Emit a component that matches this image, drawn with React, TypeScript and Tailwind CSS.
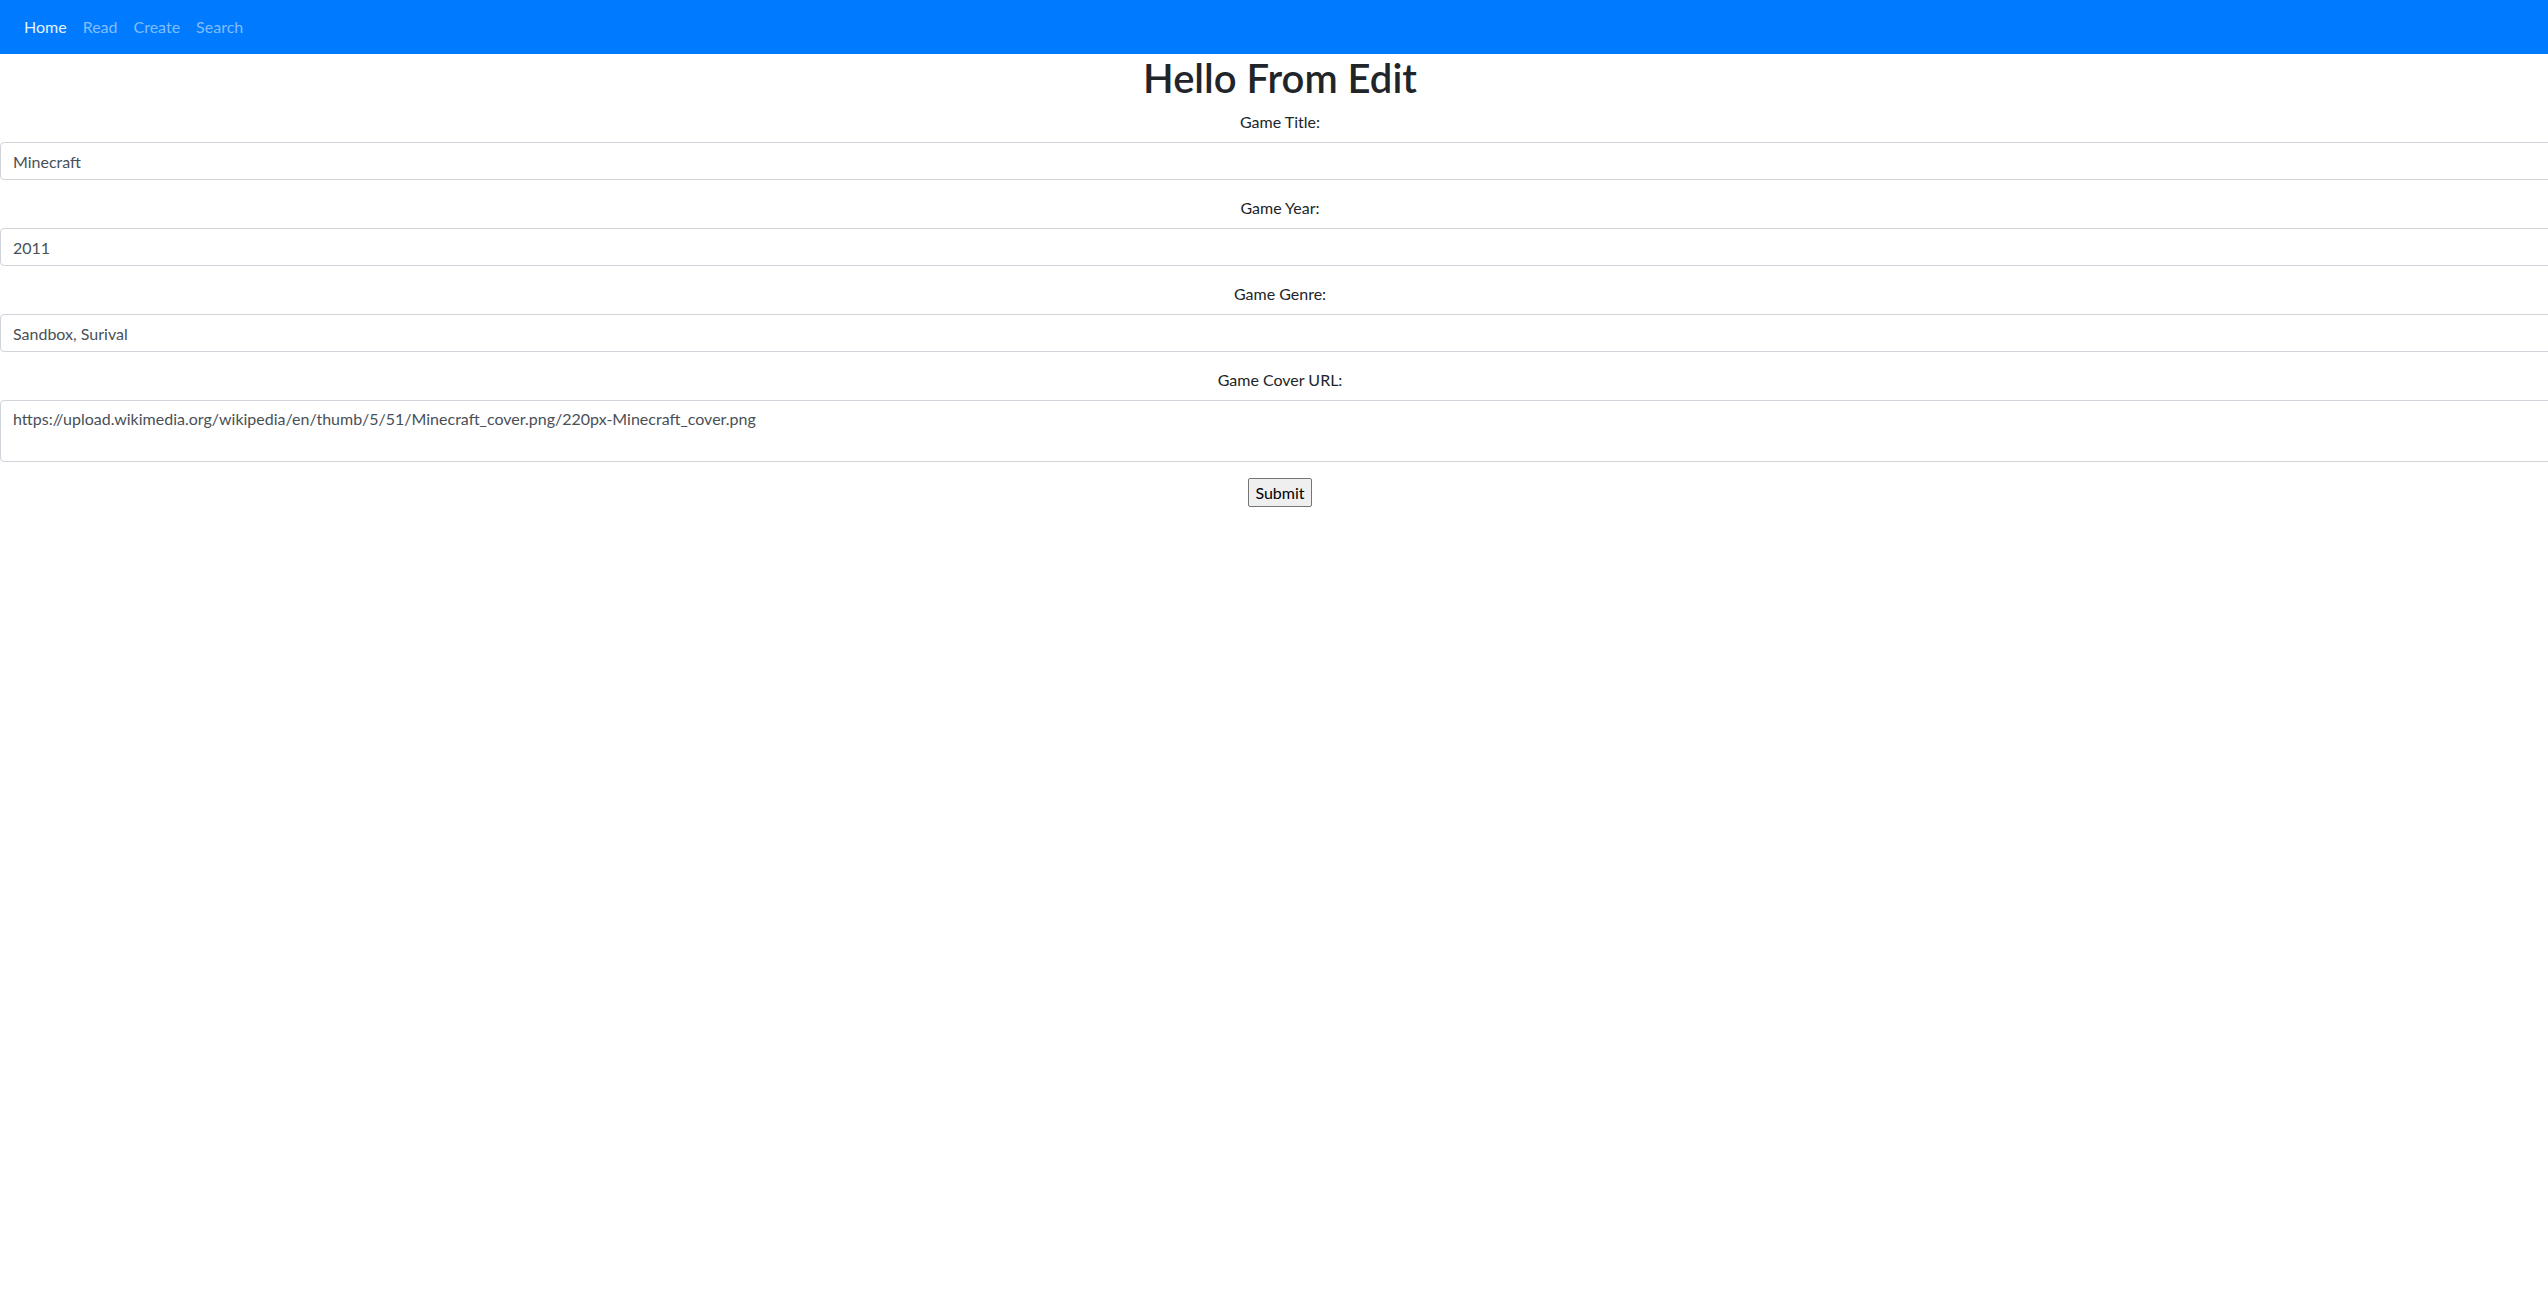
import React from "react";

const font = { fontFamily: 'Lato, "Noto Sans", sans-serif' };

export default function App() {
  const inputCls =
    "block w-full h-[38px] px-3 py-1.5 text-base leading-6 text-[#495057] bg-white border border-[#ced4da] rounded-[4px] outline-none";
  return (
    <div className="min-h-screen bg-white overflow-hidden" style={font}>
      <nav className="h-[54px] bg-[#007bff] flex items-center px-4">
        <a className="px-2 text-base leading-6 text-[#e6f1ff]">Home</a>
        <a className="px-2 text-base leading-6 text-[#80bdff]">Read</a>
        <a className="px-2 text-base leading-6 text-[#80bdff]">Create</a>
        <a className="px-2 text-base leading-6 text-[#80bdff]">Search</a>
      </nav>
      <div className="w-[calc(100%+12px)] text-center text-[#212529]">
        <h1 className="text-[40px] leading-[48px] font-semibold mb-2">Hello From Edit</h1>
        <form className="text-left" onSubmit={(e) => e.preventDefault()}>
          <div className="mb-4">
            <label className="block text-center text-base leading-6 mb-2">Game Title:</label>
            <input className={inputCls} defaultValue="Minecraft" />
          </div>
          <div className="mb-4">
            <label className="block text-center text-base leading-6 mb-2">Game Year:</label>
            <input className={inputCls} defaultValue="2011" />
          </div>
          <div className="mb-4">
            <label className="block text-center text-base leading-6 mb-2">Game Genre:</label>
            <input className={inputCls} defaultValue="Sandbox, Surival" />
          </div>
          <div className="mb-4">
            <label className="block text-center text-base leading-6 mb-2">Game Cover URL:</label>
            <textarea
              rows={2}
              className="block w-full h-[62px] px-3 py-1.5 text-base leading-6 text-[#495057] bg-white border border-[#ced4da] rounded-[4px] outline-none resize-y"
              defaultValue="https://upload.wikimedia.org/wikipedia/en/thumb/5/51/Minecraft_cover.png/220px-Minecraft_cover.png"
            />
          </div>
          <div className="text-center">
            <button
              type="submit"
              className="h-[29px] px-[6px] text-base leading-6 text-black bg-[#efefef] border border-[#767676] rounded-[2px]"
            >
              Submit
            </button>
          </div>
        </form>
      </div>
    </div>
  );
}
